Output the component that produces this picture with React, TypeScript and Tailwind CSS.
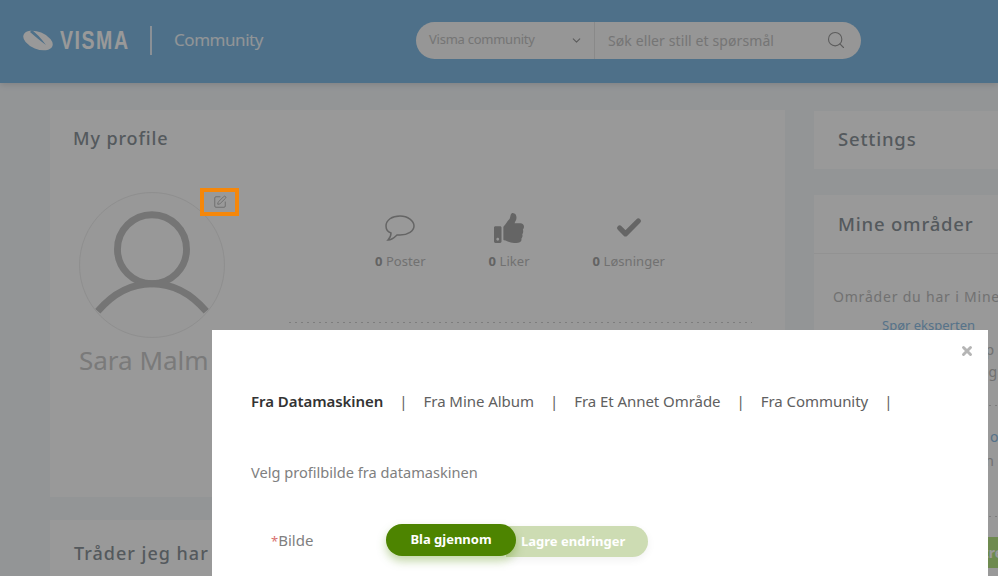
import { Search, ChevronDown, SquarePen, Check, X } from "lucide-react";
import { FaThumbsUp } from "react-icons/fa";

const ui = "font-['Noto_Sans',sans-serif]";
const dots = "h-px bg-[repeating-linear-gradient(to_right,#d0d0d0_0,#d0d0d0_2px,transparent_2px,transparent_6px)]";

function Stat({ icon, count, label }: { icon: React.ReactNode; count: string; label: string }) {
    return (
        <div className="flex flex-col items-center">
            <div className="h-[34px] flex items-center justify-center text-[#a8a8a8]">{icon}</div>
            <div className="mt-[7px] text-[13px] leading-[18px] tracking-[0.05px] text-[#bdbdbd]">
                <span className="font-bold text-[#a5a5a5]">{count}</span> {label}
            </div>
        </div>
    );
}

export default function App() {
    return (
        <div className={`relative w-[998px] h-[576px] overflow-hidden bg-[#f5f8fb] ${ui}`}>
            {/* header */}
            <header className="relative h-[83px] pb-[3px] bg-[#82bbe4] flex items-center shadow-[0_2px_6px_rgba(0,0,0,0.12)]">
                <div className="w-[416px] pl-[23px] flex items-center">
                    <svg width="30" height="21" viewBox="0 0 30 21" className="shrink-0">
                        <ellipse cx="15" cy="10.5" rx="15.5" ry="8.5" transform="rotate(22 15 10.5)" fill="#fff" />
                        <path d="M9 0C13 3 18 8 23 15 17 11 12 6 7 2z" fill="#82bbe4" />
                    </svg>
                    <span className="ml-[7px] w-[69px] text-[25px] leading-none font-bold text-white tracking-[2px] font-['Liberation_Sans',sans-serif] scale-x-[0.78] origin-left">
                        VISMA
                    </span>
                    <div className="ml-[21px] w-[2px] h-[29px] bg-white/80" />
                    <span className="ml-[22px] text-[17px] text-white/90 tracking-[-0.45px]">Community</span>
                </div>
                <div className="w-[445px] h-[37px] rounded-full bg-[#fafafa] flex items-center text-[#c4c4c4] text-[14px]">
                    <div className="w-[179px] h-full border-r border-[#e4e4e4] flex items-center justify-between pl-[13px] pr-[11px]">
                        <span className="text-[13px] tracking-[-0.25px]">Visma community</span>
                        <ChevronDown size={13} className="text-[#999]" />
                    </div>
                    <div className="flex-1 flex items-center justify-between pl-[13px] pr-[15px]">
                        <span className="text-[14px] tracking-[0.1px]">Søk eller still et spørsmål</span>
                        <Search size={20} strokeWidth={1.3} className="text-[#999]" />
                    </div>
                </div>
            </header>

            {/* page */}
            <main className="flex gap-[29px] pl-[50px] pt-[27px]">
                <div className="w-[735px] shrink-0 flex flex-col gap-[23px]">
                    <section className="h-[387px] bg-white pt-[15px] pl-[23px]">
                        <h2 className="text-[18px] leading-[26px] font-medium tracking-[0.9px] text-[#8d959b]">My profile</h2>
                        <div className="flex mt-[41px]">
                            <div className="w-[146px] ml-[6px] shrink-0">
                                <div className="w-[146px] h-[146px] rounded-full border border-[#eeeeee] bg-[#fdfdfd] overflow-hidden">
                                    <svg viewBox="0 0 146 146" className="w-full h-full" fill="none" stroke="#c3c3c3" strokeWidth="7">
                                        <circle cx="73" cy="57" r="35" />
                                        <path d="M18 120C35 100 54 92 73 92s38 8 55 28" />
                                    </svg>
                                </div>
                                <div className="mt-[4px] text-[26px] leading-[36px] text-[#cbcbcb] whitespace-nowrap">Sara Malm</div>
                            </div>
                            <div className="ml-[64px] mt-[19px] w-[463px] shrink-0">
                                <div className="flex gap-[63px] pl-[86px]">
                                    <Stat
                                        label="Poster"
                                        count="0"
                                        icon={
                                            <svg width="30" height="26" viewBox="0 0 30 26" fill="none" stroke="currentColor" strokeWidth="1.5">
                                                <path d="M15 1C7 1 1 5 1 11c0 3 2 6 5 7 0 2-1 5-3 7 4 0 7-3 9-5h3c8 0 14-4 14-9S23 1 15 1z" />
                                            </svg>
                                        }
                                    />
                                    <Stat label="Liker" count="0" icon={<FaThumbsUp size={30} />} />
                                    <Stat label="Løsninger" count="0" icon={<Check size={28} strokeWidth={4.5} />} />
                                </div>
                                <div className={`mt-[52px] ${dots}`} />
                            </div>
                        </div>
                    </section>
                    <section className="h-[80px] bg-white pt-[20px] pl-[24px]">
                        <h2 className="text-[18px] leading-[26px] font-medium tracking-[1px] text-[#8d959b] whitespace-nowrap">Tråder jeg har startet</h2>
                    </section>
                </div>

                <div className="w-[300px] shrink-0 flex flex-col gap-[26px] pt-[1px]">
                    <section className="h-[58px] pb-[2px] bg-white flex items-center pl-[24px]">
                        <h2 className="text-[18.5px] font-medium tracking-[0.8px] text-[#8d959b]">Settings</h2>
                    </section>
                    <section className="h-[400px] bg-white">
                        <div className="h-[59px] border-b border-[#f4f4f4] pl-[24px] pt-[14px]">
                            <h2 className="text-[18.5px] leading-[30px] font-medium tracking-[0.8px] text-[#8d959b]">Mine områder</h2>
                        </div>
                        <div className="pl-[19px] pt-[33px] text-[14px] whitespace-nowrap text-[#bdbdbd]">
                            <p className="leading-[20px] tracking-[0.8px]">Områder du har i Mine områder</p>
                            <p className="mt-[9px] pl-[49px] text-[13px] leading-[18px] text-[#8fc0e6]">Spør eksperten</p>
                            <p className="mt-[5px] w-[161px] text-right leading-[22px]">Hjelp</p>
                            <p className="pl-[147px] leading-[22px]">og lønn</p>
                            <div className={`mt-[22px] ${dots}`} />
                            <p className="mt-[20px] pl-[157px] leading-[22px] text-[#8fc0e6]">om</p>
                            <p className="mt-[2px] w-[161px] text-right leading-[22px]">Lønn</p>
                            <div className={`mt-[44px] ${dots}`} />
                            <div className="mt-[20px] ml-[70px] w-[200px] h-[31px] pl-[23px] bg-[#b7e684] text-white font-bold flex items-center">Administrer</div>
                        </div>
                    </section>
                </div>
            </main>

            {/* dim layer */}
            <div className="absolute inset-0 bg-black/40" />

            {/* edit marker */}
            <div className="absolute left-[200px] top-[188px] w-[39px] h-[28px] border-[4px] border-[#f5870a] flex items-center justify-center">
                <SquarePen size={14} strokeWidth={1.5} className="text-[#6a6a6a]" />
            </div>

            {/* dialog */}
            <div className="absolute left-[212px] top-[330px] w-[776px] h-[300px] bg-white pl-[39px]">
                <X size={14} strokeWidth={5} className="absolute right-[14px] top-[14px] text-[#b5b5b5]" />
                <div className="flex items-center pt-[60px] text-[15px] leading-[22px] text-[#606060] tracking-[-0.05px] whitespace-nowrap">
                    <span className="font-semibold text-[#333]">Fra Datamaskinen</span>
                    <span className="mx-[16px]">|</span>
                    <span>Fra Mine Album</span>
                    <span className="mx-[16px]">|</span>
                    <span>Fra Et Annet Område</span>
                    <span className="mx-[16px]">|</span>
                    <span>Fra Community</span>
                    <span className="mx-[16px]">|</span>
                </div>
                <p className="mt-[49px] text-[14.6px] leading-[22px] text-[#808080]">Velg profilbilde fra datamaskinen</p>
                <div className="flex items-start mt-[41px]">
                    <label className="w-[135px] pl-[20px] text-[15px] leading-[32px] text-[#808080]">
                        <span className="text-[13px] text-[#d87070]">*</span>Bilde
                    </label>
                    <button className="relative z-10 w-[130px] h-[32px] rounded-full bg-[#4d8400] text-white text-[13px] font-bold shadow-[0_5px_10px_rgba(79,138,0,0.35)]">
                        Bla gjennom
                    </button>
                    <button className="mt-[2px] ml-[-10px] w-[142px] h-[31px] rounded-r-full bg-[#cddcb3] text-white text-[13px] font-bold text-left pl-[15px] shadow-[0_3px_8px_rgba(0,0,0,0.06)]">
                        Lagre endringer
                    </button>
                </div>
            </div>
        </div>
    );
}
